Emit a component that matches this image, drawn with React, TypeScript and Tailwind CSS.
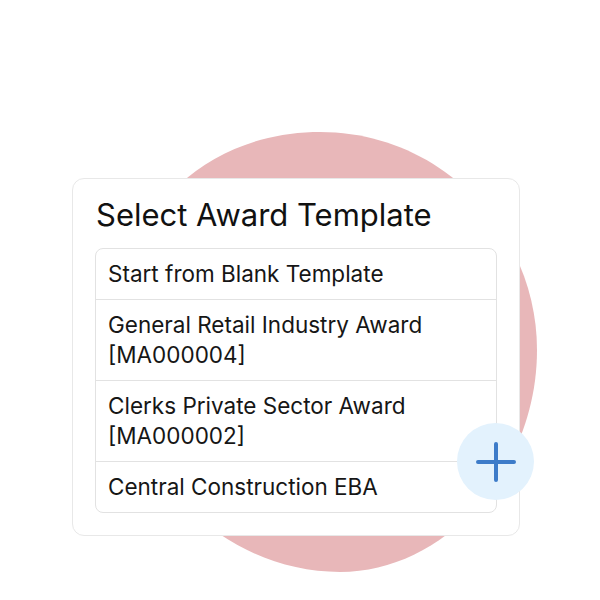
import React from 'react'

const items = [
  'Start from Blank Template',
  'General Retail Industry Award [MA000004]',
  'Clerks Private Sector Award [MA000002]',
  'Central Construction EBA',
]

function Blob() {
  return (
    <svg className="absolute left-0 top-0" width="600" height="600" viewBox="0 0 600 600">
      <path
        d="M313 132 C 440 128 537 232 537 350 C 537 470 445 572 340 572 C 225 572 125 475 115 355 C 105 235 190 136 313 132 Z"
        fill="#e8b7b9"
      />
    </svg>
  )
}

function PlusButton() {
  return (
    <div className="absolute left-[457px] top-[423px] w-[77px] h-[77px] rounded-full bg-[#e3f2fd] flex items-center justify-center">
      <svg width="40" height="40" viewBox="0 0 40 40">
        <path d="M20 2 V38 M2 20 H38" stroke="#3d7cc9" strokeWidth="4" strokeLinecap="round" />
      </svg>
    </div>
  )
}

export default function App() {
  return (
    <div className="relative w-[600px] h-[600px] bg-white overflow-hidden" style={{ fontFamily: 'Inter, "Noto Sans", sans-serif' }}>
      <Blob />
      <div className="relative pt-[178px] pl-[72px]">
        <div className="w-[448px] bg-white border border-[#e8e8e8] rounded-xl px-[22px] pt-[18px] pb-[22px]">
          <h2 className="text-[31px] leading-[36px] text-[#111] mb-[15px] pl-[1px]">Select Award Template</h2>
          <div className="border border-[#e2e2e2] rounded-lg">
            {items.map((t, i) => (
              <div
                key={i}
                className={`px-3 py-[10px] text-[22.5px] leading-[30px] text-[#161616] ${i > 0 ? 'border-t border-[#e2e2e2]' : ''}`}
              >
                {t}
              </div>
            ))}
          </div>
        </div>
      </div>
      <PlusButton />
    </div>
  )
}
